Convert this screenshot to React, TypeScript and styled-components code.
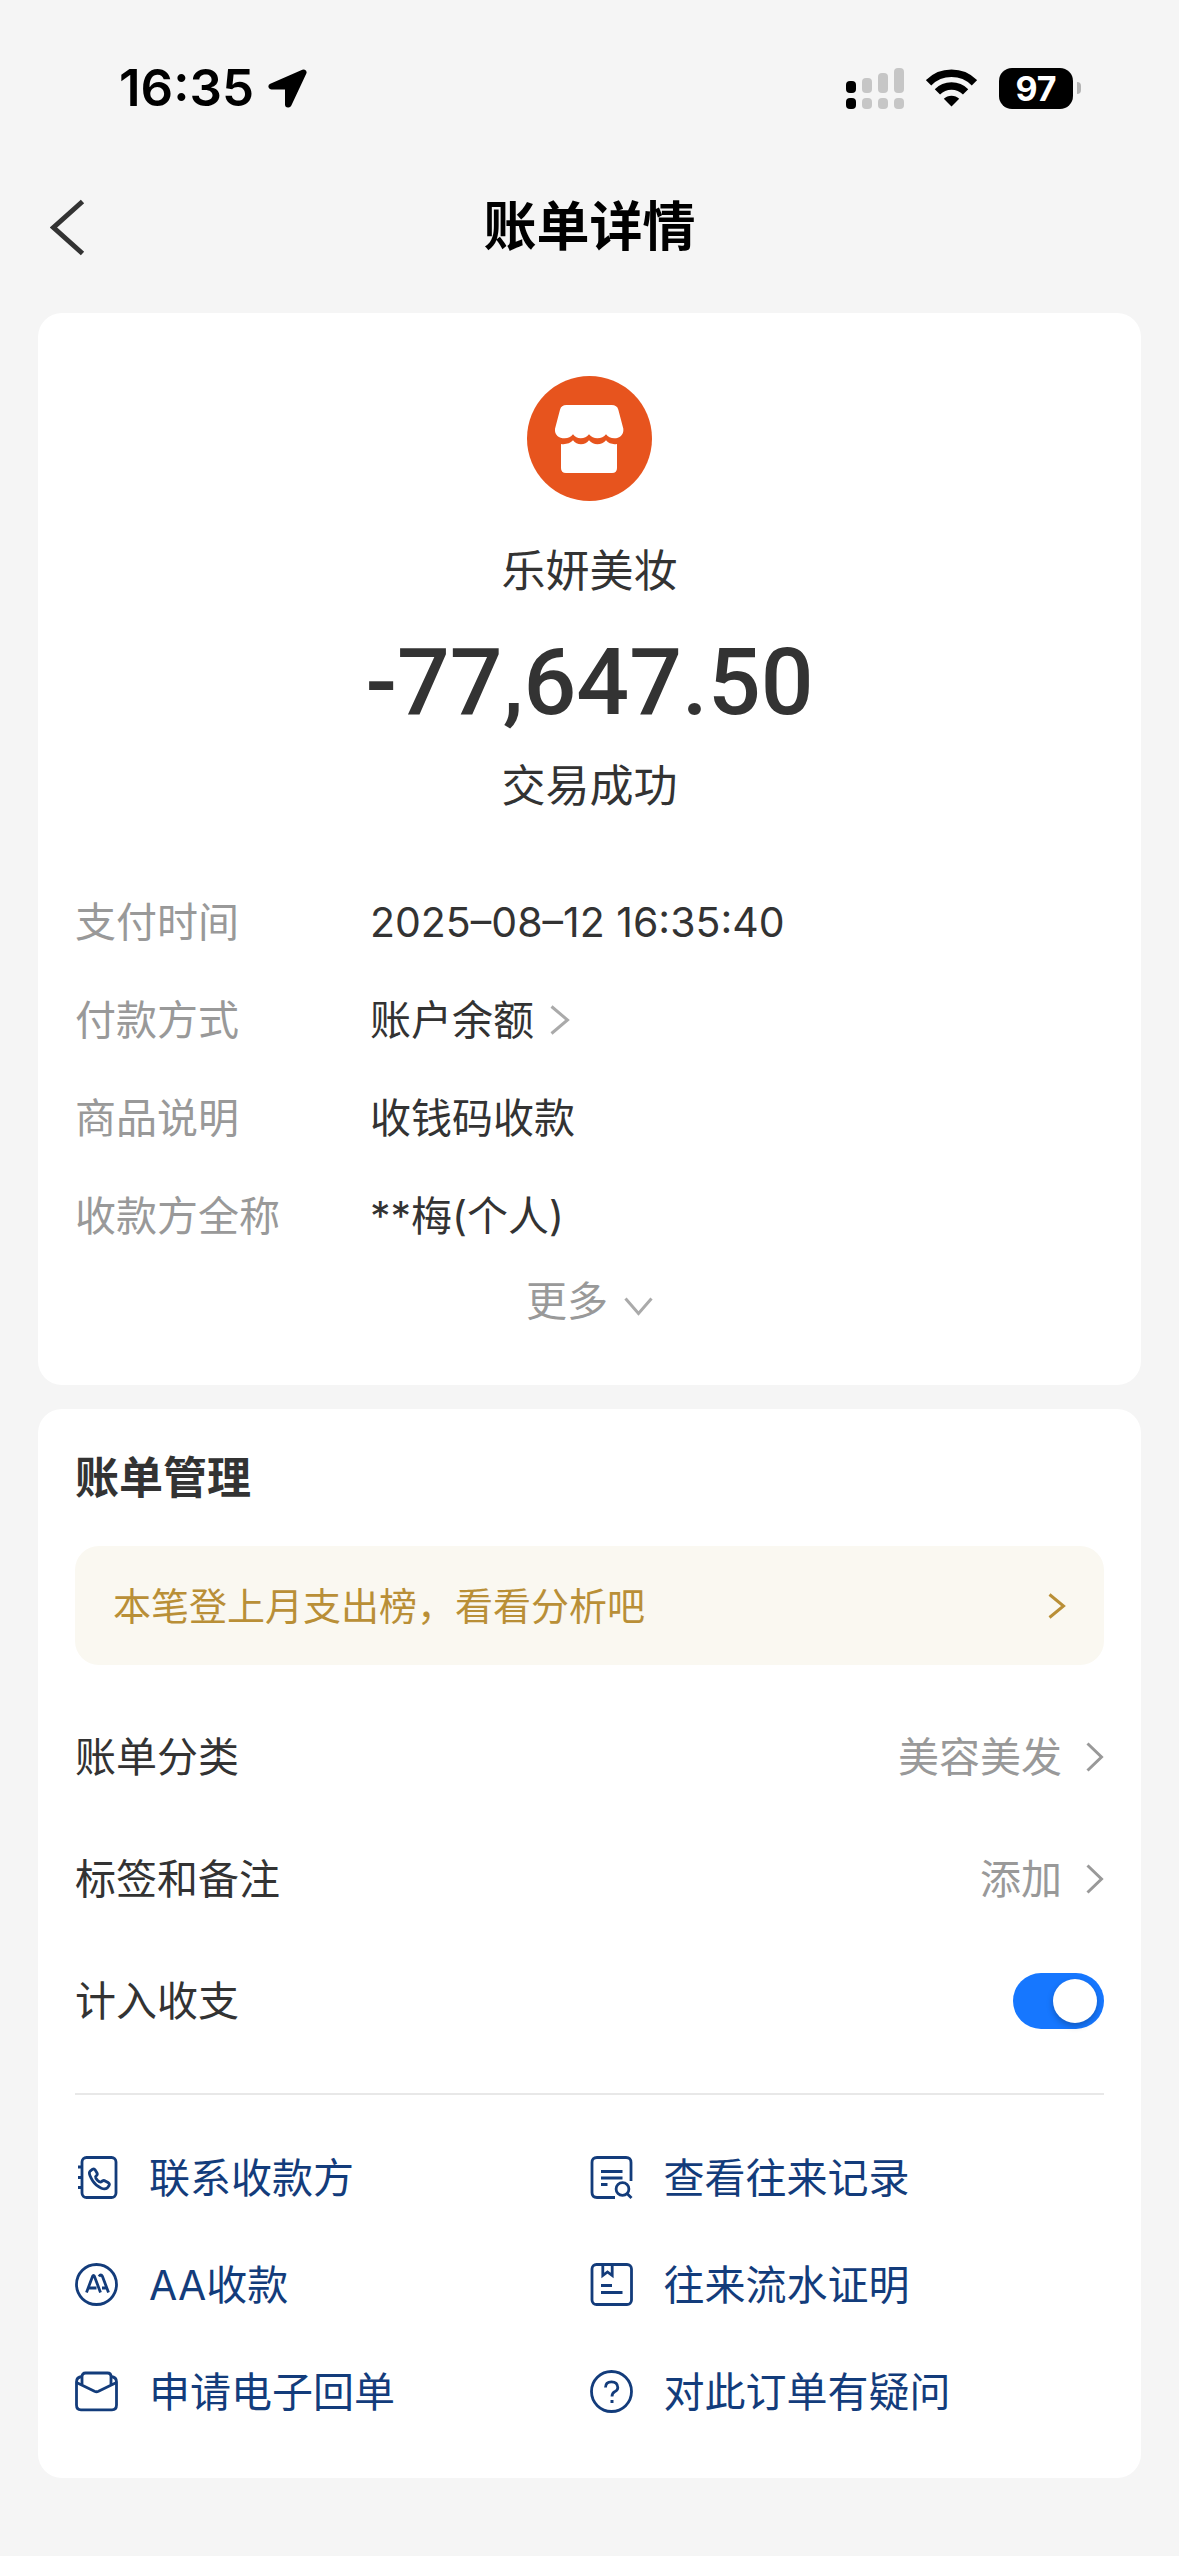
import React, { useState } from "react";
import styled, { createGlobalStyle } from "styled-components";

const GlobalStyle = createGlobalStyle`
  *, *::before, *::after { box-sizing: border-box; }
  body {
    margin: 0;
    background: #f5f5f5;
    color: #333333;
    font-family: Inter, "Noto Sans CJK SC", sans-serif;
    font-size: 41px;
    line-height: 60px;
  }
  button, input { margin: 0; padding: 0; border: 0; background: none; font: inherit; color: inherit; }
  button { cursor: pointer; }
  a { color: inherit; text-decoration: none; }
  svg { display: block; flex: none; }
`;

const Page = styled.div`
  display: flex;
  flex-direction: column;
  min-height: 100vh;
`;

const StatusBar = styled.div`
  display: flex;
  align-items: center;
  justify-content: space-between;
  height: 176px;
  padding: 0 98px 0 119px;
  color: #000000;
`;

const StatusGroup = styled.div<{ $gap: number }>`
  display: flex;
  align-items: center;
  gap: ${(p) => p.$gap}px;
`;

const Clock = styled.span`
  font-size: 51px;
  font-weight: 600;
`;

const Battery = styled.div`
  display: flex;
  align-items: center;
  gap: 4px;
`;

const BatteryBody = styled.span`
  width: 74px;
  height: 41px;
  border-radius: 13px;
  background: #000000;
  color: #ffffff;
  font-size: 34px;
  font-weight: 700;
  line-height: 41px;
  text-align: center;
`;

const BatteryTip = styled.span`
  width: 4px;
  height: 12px;
  border-radius: 0 4px 4px 0;
  background: #b4b4b4;
`;

const NavBar = styled.header`
  display: grid;
  grid-template-columns: 1fr auto 1fr;
  align-items: center;
  height: 102px;
  padding: 0 50px;
`;

const BackButton = styled.button`
  justify-self: start;
`;

const Title = styled.h1`
  margin: 0;
  color: #000000;
  font-size: 53px;
  font-weight: 700;
`;

const Main = styled.main`
  display: flex;
  flex-direction: column;
  gap: 24px;
  padding: 35px 38px 79px;
`;

const Card = styled.section<{ $padding: string }>`
  display: flex;
  flex-direction: column;
  padding: ${(p) => p.$padding};
  border-radius: 24px;
  background: #ffffff;
`;

const Summary = styled.div`
  display: flex;
  flex-direction: column;
  align-items: center;
`;

const SummaryText = styled.p<{ $top: number }>`
  margin: ${(p) => p.$top}px 0 0;
  font-size: 44px;
`;

const Amount = styled.p`
  margin: 32px 0 0;
  font-family: Roboto, sans-serif;
  font-size: 93px;
  font-weight: 500;
  line-height: 100px;
`;

const Details = styled.dl`
  display: grid;
  grid-template-columns: 295px 1fr;
  row-gap: 38px;
  margin: 76px 0 25px;
`;

const Term = styled.dt`
  color: #999999;
`;

const Value = styled.dd`
  margin: 0;
`;

const ValueButton = styled.button<{ $gap: number; $muted?: boolean }>`
  display: flex;
  align-items: center;
  gap: ${(p) => p.$gap}px;
  color: ${(p) => (p.$muted ? "#999999" : "inherit")};
`;

const MoreButton = styled(ValueButton)`
  align-self: center;
  align-items: baseline;
`;

const SectionTitle = styled.h2`
  margin: 0;
  font-size: 44px;
  font-weight: 700;
`;

const Notice = styled.a`
  display: flex;
  align-items: center;
  justify-content: space-between;
  height: 119px;
  margin: 38px 0 31px;
  padding: 0 38px;
  border-radius: 24px;
  background: #faf8f1;
  color: #b98f37;
  font-size: 38px;
`;

const SettingRow = styled.div`
  display: flex;
  align-items: center;
  justify-content: space-between;
  height: 122px;
`;

const Switch = styled.input`
  appearance: none;
  display: flex;
  align-items: center;
  width: 91px;
  height: 56px;
  padding: 0 7px;
  border-radius: 28px;
  background: #e5e5e5;
  cursor: pointer;

  &::before {
    content: "";
    width: 44px;
    height: 44px;
    border-radius: 50%;
    background: #ffffff;
    box-shadow: 0 3px 6px rgba(0, 0, 0, 0.25);
  }

  &:checked {
    justify-content: flex-end;
    background: #1677ff;
  }
`;

const Divider = styled.hr`
  width: 100%;
  height: 2px;
  margin: 31px 0 29px;
  border: 0;
  background: #e8e8e8;
`;

const Actions = styled.nav`
  display: grid;
  grid-template-columns: 1fr 1fr;
`;

const ActionLink = styled.a`
  display: flex;
  align-items: center;
  gap: 31px;
  height: 107px;
  color: #133c7b;
`;

type ChevronProps = { width: number; height: number; color: string; weight?: number; dir?: "left" | "right" | "down" };

function Chevron({ width: w, height: h, color, weight = 3, dir = "right" }: ChevronProps) {
  const m = weight / 2;
  const points = {
    left: `${w - m},${m} ${m + 1},${h / 2} ${w - m},${h - m}`,
    right: `${m},${m} ${w - m - 1},${h / 2} ${m},${h - m}`,
    down: `${m},${m} ${w / 2},${h - m - 1} ${w - m},${m}`,
  }[dir];
  return (
    <svg width={w} height={h} viewBox={`0 0 ${w} ${h}`} fill="none" stroke={color} strokeWidth={weight} aria-hidden="true">
      <polyline points={points} />
    </svg>
  );
}

function LocationArrow() {
  return (
    <svg width="39" height="39" viewBox="0 0 39 39" fill="#000" stroke="#000" strokeWidth="6" strokeLinejoin="round" aria-hidden="true">
      <path d="M35.500 3.500L3.500 17.500H20V35.500H20.500Z" />
    </svg>
  );
}

function SignalIcon() {
  const tops = [13, 10, 5, 0];
  return (
    <svg width="58" height="41" viewBox="0 0 58 41" aria-hidden="true">
      {tops.map((top, i) => (
        <g key={top} fill={i === 0 ? "#000000" : "#c6c6c6"}>
          <rect x={i * 16} y={top} width="10" height={25 - top} rx="4" />
          <rect x={i * 16} y="30" width="10" height="11" rx="4" />
        </g>
      ))}
    </svg>
  );
}

function WifiIcon() {
  return (
    <svg width="51" height="38" viewBox="0 0 51 38" fill="none" stroke="#000" strokeWidth="7.500" aria-hidden="true">
      <path d="M2.600 13.800A32.500 32.500 0 0 1 48.400 13.800" />
      <path d="M11.400 22.800A20 20 0 0 1 39.600 22.800" />
      <path d="M25.500 37.500L17.800 29.800A11 11 0 0 1 33.200 29.800Z" fill="#000" stroke="none" />
    </svg>
  );
}

function StoreLogo() {
  return (
    <svg width="125" height="125" viewBox="0 0 375 375" fill="#fff" aria-hidden="true">
      <circle cx="187.500" cy="187.500" r="187.500" fill="#e7541e" />
      <path d="M118 87H254Q270 87 274 101L289 158C291 177 277 187 262 187Q246 187 237 175Q228 187 211 187Q196 187 186 175Q177 187 161 187Q147 187 138 175Q129 187 113 187C96 187 82 177 84 158L99 101Q103 87 118 87Z" />
      <path d="M102 204Q124 207 138 193Q147 205 162 205Q177 205 186 193Q197 205 211 205Q227 205 237 193Q249 207 270 204V276Q270 291 255 291H117Q102 291 102 276Z" />
    </svg>
  );
}

function ActionIcon({ children }: { children: React.ReactNode }) {
  return (
    <svg width="43" height="43" viewBox="0 0 43 43" fill="none" stroke="currentColor" strokeWidth="2.800" aria-hidden="true">
      {children}
    </svg>
  );
}

const contactIcon = (
  <ActionIcon>
    <rect x="7" y="1.500" width="34" height="40" rx="4.500" />
    <path d="M3 11H8M3 21.500H8M3 31.500H8" />
    <path d="M15.500 14.800L17.600 13.200Q19.200 12.400 20.200 14L22 17Q22.800 18.600 21.400 19.800L20.600 20.600Q20.400 22 22.400 24.200Q24.600 26.400 26 26L27.400 25Q28.800 24 30.200 25L33.400 26.800Q35 28 34 29.600L32.400 31.800Q30 33.600 26.400 32.200Q21 30 17.800 25Q14 19 14.400 16.600Q14.600 15.600 15.500 14.800Z" />
  </ActionIcon>
);

const historyIcon = (
  <ActionIcon>
    <path d="M41 25V6.500Q41 1.500 36 1.500H7Q2 1.500 2 6.500V36.500Q2 41.500 7 41.500H25" />
    <path d="M11 15.500H32.500M11 22H32.500M11 28.500H17.500" />
    <circle cx="32.500" cy="33" r="6.400" />
    <path d="M37 37.500L41.500 42" />
  </ActionIcon>
);

const splitIcon = (
  <ActionIcon>
    <circle cx="21.500" cy="21.500" r="20" />
    <path d="M11.500 29.500L17.500 13.500Q18.500 11.500 19.500 13.500L25.500 29.500M14 25H21.500" />
    <path d="M24 13.500Q25.800 10.500 27.500 13.500L33.500 29.500M27 25H31.500" />
  </ActionIcon>
);

const proofIcon = (
  <ActionIcon>
    <rect x="2" y="1.500" width="39.500" height="40" rx="4.500" />
    <path d="M12.800 1.500V12.500L17.500 9L22.200 12.500V1.500" />
    <path d="M11 22.500H22M11 29.500H32.500" />
  </ActionIcon>
);

const receiptIcon = (
  <ActionIcon>
    <path d="M7 6.500Q1.500 7 1.500 12V35Q1.500 39.800 6 39.800H37Q41.500 39.800 41.500 35V12Q41.500 7 36 6.500" />
    <path d="M7 14.500V6.500Q7 3 10.500 3H32.500Q36 3 36 6.500V14.500" />
    <path d="M1.500 12.500L19.500 21.300Q21.500 22.200 23.500 21.300L41.500 12.500" />
  </ActionIcon>
);

const questionIcon = (
  <ActionIcon>
    <circle cx="21.500" cy="21.500" r="20" />
    <path d="M15.500 17.500Q15.500 11.800 21.500 11.800T27.800 17.500Q27.800 20.200 25 21.600Q22 23 22 26.500" />
    <path d="M20.500 31.500H23.500" strokeWidth="3" />
  </ActionIcon>
);

const actions = [
  { icon: contactIcon, label: "联系收款方" },
  { icon: historyIcon, label: "查看往来记录" },
  { icon: splitIcon, label: "AA收款" },
  { icon: proofIcon, label: "往来流水证明" },
  { icon: receiptIcon, label: "申请电子回单" },
  { icon: questionIcon, label: "对此订单有疑问" },
];

const settings = [
  { label: "账单分类", value: "美容美发" },
  { label: "标签和备注", value: "添加" },
];

export default function App() {
  const [counted, setCounted] = useState(true);

  return (
    <Page>
      <GlobalStyle />
      <StatusBar>
        <StatusGroup $gap={14}>
          <Clock>16:35</Clock>
          <LocationArrow />
        </StatusGroup>
        <StatusGroup $gap={22}>
          <SignalIcon />
          <WifiIcon />
          <Battery>
            <BatteryBody>97</BatteryBody>
            <BatteryTip />
          </Battery>
        </StatusGroup>
      </StatusBar>

      <NavBar>
        <BackButton type="button" aria-label="返回">
          <Chevron width={35} height={57} color="#333333" weight={5} dir="left" />
        </BackButton>
        <Title>账单详情</Title>
      </NavBar>

      <Main>
        <Card $padding="63px 37px 54px">
          <Summary>
            <StoreLogo />
            <SummaryText $top={40}>乐妍美妆</SummaryText>
            <Amount>-77,647.50</Amount>
            <SummaryText $top={23}>交易成功</SummaryText>
          </Summary>
          <Details>
            <Term>支付时间</Term>
            <Value>2025–08–12 16:35:40</Value>
            <Term>付款方式</Term>
            <Value>
              <ValueButton type="button" $gap={16}>
                账户余额
                <Chevron width={20} height={30} color="#aaaaaa" />
              </ValueButton>
            </Value>
            <Term>商品说明</Term>
            <Value>收钱码收款</Value>
            <Term>收款方全称</Term>
            <Value>**梅(个人)</Value>
          </Details>
          <MoreButton type="button" $gap={16} $muted>
            更多
            <Chevron width={29} height={19} color="#aaaaaa" dir="down" />
          </MoreButton>
        </Card>

        <Card $padding="39px 37px 33px">
          <SectionTitle>账单管理</SectionTitle>
          <Notice href="#analysis">
            本笔登上月支出榜，看看分析吧
            <Chevron width={18} height={26} color="#b98f37" />
          </Notice>
          {settings.map((s) => (
            <SettingRow key={s.label}>
              <span>{s.label}</span>
              <ValueButton type="button" $gap={24} $muted>
                {s.value}
                <Chevron width={18} height={30} color="#999999" />
              </ValueButton>
            </SettingRow>
          ))}
          <SettingRow>
            <label htmlFor="counted">计入收支</label>
            <Switch id="counted" type="checkbox" checked={counted} onChange={(e) => setCounted(e.target.checked)} />
          </SettingRow>
          <Divider />
          <Actions>
            {actions.map((a) => (
              <ActionLink key={a.label} href="#action">
                {a.icon}
                {a.label}
              </ActionLink>
            ))}
          </Actions>
        </Card>
      </Main>
    </Page>
  );
}
